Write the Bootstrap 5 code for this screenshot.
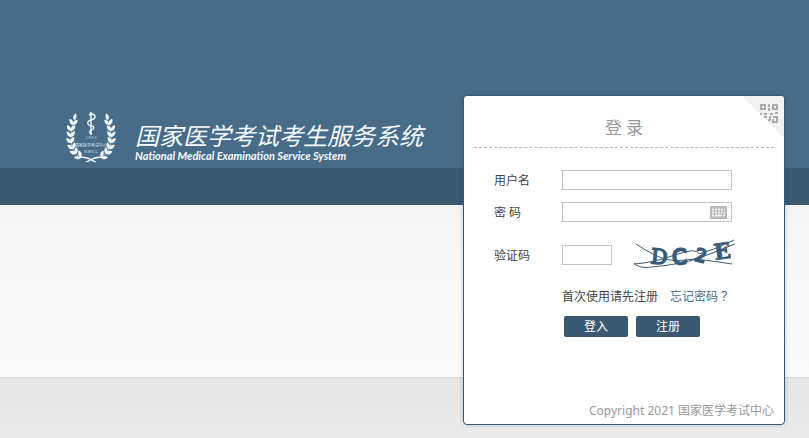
<!DOCTYPE html>
<html lang="zh-CN">
<head>
<meta charset="utf-8">
<meta name="viewport" content="width=device-width, initial-scale=1">
<title>国家医学考试考生服务系统</title>
<link href="https://cdn.jsdelivr.net/npm/bootstrap@5.3.0/dist/css/bootstrap.min.css" rel="stylesheet">
<style>
:root { --deep: #3b5871; --sky: #486b88; }
body {
  min-height: 100vh;
  font: 12px/20px "Noto Sans", "Noto Sans CJK SC", sans-serif;
  color: #444;
  background:
    linear-gradient(var(--sky), var(--sky)) 0 0 / 100% 168px no-repeat,
    linear-gradient(var(--deep), var(--deep)) 0 168px / 100% 37px no-repeat,
    linear-gradient(#f4f4f4, #fafafa 50%, #fbfbfb) 0 205px / 100% 172px no-repeat,
    linear-gradient(#d9d9d9, #d9d9d9) 0 377px / 100% 1px no-repeat,
    linear-gradient(#e5e5e5, #ececec) 0 378px / 100% 60px no-repeat,
    #ececec;
}
.page { padding: 95px 24px 12px 66px; }
.brand { color: #f4fbff; padding-top: 16px; }
.brand h1 { font: italic 400 24px/26px "Liberation Sans", "Noto Sans CJK SC", sans-serif; }
.brand p { font: italic 700 11px/12px Lato, sans-serif; }
.brand-text { padding-top: 13px; margin-left: 18px; }
.login { width: 322px; min-height: 330px; border: 1px solid var(--deep); border-radius: 4px; box-shadow: 0 0 4px #1c3a5540; }
.login h2 { font: 400 17px/24px "Noto Sans CJK SC", sans-serif; color: #999; margin: 0 10px; padding: 19px 0 8px; border-bottom: 1px dashed #bbb; }
.login form { padding: 22px 30px 0; }
.field-label { width: 68px; padding-top: 2px; line-height: 18px; }
.login .form-control { height: 20px; min-height: 20px; padding: 0 4px; border-color: #c3c3c3; font-size: 12px; }
.wide { width: 170px; }
.code { width: 50px; }
.keys { right: 5px; top: 4px; line-height: 0; }
.row-gap { margin-bottom: 12px; }
.code-row { margin-top: 16px; }
.captcha { margin-left: 20px; overflow: visible; }
.hints { margin: 14px 0 9px 68px; }
.hints a { color: var(--sky); margin-left: 12px; }
.hints .ask { font-family: "Noto Sans CJK TC", sans-serif; }
.actions { margin-left: 70px; }
.actions .btn { --bs-btn-color: #fff; --bs-btn-bg: #3b5871; --bs-btn-hover-color: #fff; --bs-btn-hover-bg: #486b88; width: 64px; height: 21px; font-size: 12px; line-height: 21px; border-radius: 2px; }
.login footer { color: #999; margin: auto 10px 3px; }
.fold { line-height: 0; border-top-right-radius: 3px; }
</style>
<script src="https://cdn.jsdelivr.net/npm/bootstrap@5.3.0/dist/js/bootstrap.bundle.min.js"></script>
</head>
<body>
<main class="page d-flex justify-content-between align-items-start">
  <header class="brand d-flex flex-shrink-0">
    <svg width="51" height="53" viewBox="0 0 51 53" fill="none" aria-hidden="true">
      <defs>
        <path id="leaf" d="M0 0C-2.200-1.8-2.200-4.6 0-7C2.200-4.6 2.200-1.8 0 0Z" fill="#f0faff"/>
        <g id="branch">
          <path d="M28 51Q21 46 14 46Q6 41 5 30Q4 17 10 7" stroke="#d5e8f4" stroke-width=".6"/>
          <use href="#leaf" transform="translate(8 9) rotate(14)"/>
          <use href="#leaf" transform="translate(7 14) rotate(-28)"/>
          <use href="#leaf" transform="translate(7 14) rotate(42)"/>
          <use href="#leaf" transform="translate(5 20) rotate(-34)"/>
          <use href="#leaf" transform="translate(5 20) rotate(36)"/>
          <use href="#leaf" transform="translate(5 26) rotate(-38)"/>
          <use href="#leaf" transform="translate(5 26) rotate(32)"/>
          <use href="#leaf" transform="translate(5 32) rotate(-44)"/>
          <use href="#leaf" transform="translate(5 32) rotate(26)"/>
          <use href="#leaf" transform="translate(7 38) rotate(-54)"/>
          <use href="#leaf" transform="translate(7 38) rotate(14)"/>
          <use href="#leaf" transform="translate(10 43) rotate(-66)"/>
          <use href="#leaf" transform="translate(10 43) rotate(2)"/>
          <use href="#leaf" transform="translate(15 47) rotate(-84)"/>
          <use href="#leaf" transform="translate(15 46) rotate(-18)"/>
          <path d="M13 46Q20 46 24 48T30 51" stroke="#f0faff" stroke-width="1.3"/>
        </g>
      </defs>
      <use href="#branch"/>
      <use href="#branch" transform="matrix(-1 0 0 1 50 0)"/>
      <path d="M25 2V24" stroke="#f0faff" stroke-width="1.4"/>
      <path d="M23 4Q29 2 29 6Q29 8 25 9Q21 10 22 13Q23 15 26 15Q29 16 27 18L24 20Q23 22 26 23" stroke="#f0faff" stroke-width="1.4"/>
      <circle cx="25" cy="2.500" r="1.500" fill="#f0faff"/>
      <g fill="#d8eaf6" font-family="Noto Sans CJK SC, sans-serif" text-anchor="middle">
        <text x="25" y="28" font-size="3">1&#160; 9&#160; 8&#160; 5</text>
        <text x="25" y="36" font-size="4">国家医学考试中心</text>
        <text x="25" y="42" font-size="4">N M E C</text>
      </g>
    </svg>
    <div class="brand-text">
      <h1 class="m-0 text-nowrap">国家医学考试考生服务系统</h1>
      <p class="m-0 text-nowrap">National Medical Examination Service System</p>
    </div>
  </header>

  <section class="login bg-white position-relative d-flex flex-column flex-shrink-0">
    <a href="#qr" class="fold position-absolute top-0 end-0 overflow-hidden" aria-label="二维码登录">
      <svg width="41" height="41" viewBox="0 0 41 41" aria-hidden="true">
        <path d="M0 0H41V41Z" fill="#f2f2f2"/>
        <path d="M0 0L41 41" stroke="#e8e8e8" stroke-width="1"/>
        <g fill="none" stroke="#aaa" stroke-width="2">
          <path d="M18 9h4v4h-4zM30 9h4v4h-4z"/>
          <path d="M26 8v3M26 12v3M17 18h2M21 18h3M21 21h3M27 18h3M32 17h3M30 21h3M27 20v3M34 20v3M25 24h3M30 23v3h4v-3"/>
        </g>
      </svg>
    </a>
    <h2 class="text-center">登 录</h2>
    <form>
      <div class="d-flex align-items-center row-gap">
        <label class="field-label" for="user">用户名</label>
        <input class="form-control rounded-0 wide" id="user" type="text">
      </div>
      <div class="d-flex align-items-center row-gap">
        <label class="field-label" for="pass">密 码</label>
        <div class="position-relative wide">
          <input class="form-control rounded-0" id="pass" type="password">
          <button class="keys position-absolute border-0 p-0 bg-transparent" type="button" aria-label="软键盘">
            <svg width="17" height="13" viewBox="0 0 17 13" aria-hidden="true">
              <rect width="17" height="13" fill="#b9b9b9"/>
              <path d="M2 3.500h13M2 6.500h13" stroke="#eee" stroke-width="2" stroke-dasharray="2 1"/>
              <path d="M2 9.500h2M5 9.500h7M13 9.500h2" stroke="#eee" stroke-width="2"/>
            </svg>
          </button>
        </div>
      </div>
      <div class="d-flex align-items-center code-row">
        <label class="field-label" for="code">验证码</label>
        <input class="form-control rounded-0 code" id="code" type="text">
        <svg class="captcha flex-shrink-0" width="104" height="34" viewBox="0 0 104 34" role="img" aria-label="验证码图片">
          <g fill="#3b5b78" stroke="#3b5b78" stroke-width=".8" font-family="DejaVu Sans, sans-serif" font-weight="400">
            <text x="19" y="26" font-size="21" font-family="DejaVu Serif, serif" stroke-width="1.500" transform="rotate(5 27 18)">D</text>
            <text x="40" y="26" font-size="21" stroke-width="2" transform="rotate(-3 48 18)">C</text>
            <text x="63" y="24" font-size="18" stroke-width="1.800" transform="rotate(14 70 18)">2</text>
            <text x="82" y="21" font-size="22" font-family="DejaVu Serif, serif" font-weight="700" transform="rotate(-8 90 14)">E</text>
          </g>
          <g fill="none" stroke="#3b5b78">
            <path d="M4 6Q22 18 33 21T62 21Q82 23 100 26"/>
            <path d="M2 26Q20 25 43 17T67 16Q85 11 102 2"/>
            <path d="M2 25Q7 31 20 29Q52 26 70 19Q88 12 103 6"/>
          </g>
        </svg>
      </div>
      <div class="hints text-nowrap">首次使用请先注册<a class="text-decoration-none" href="#forgot">忘记密码<span class="ask" lang="zh-TW">？</span></a></div>
      <div class="actions d-flex gap-2">
        <button class="btn border-0 p-0" type="submit">登入</button>
        <button class="btn border-0 p-0" type="button">注册</button>
      </div>
    </form>
    <footer class="text-end">Copyright 2021 国家医学考试中心</footer>
  </section>
</main>
</body>
</html>
